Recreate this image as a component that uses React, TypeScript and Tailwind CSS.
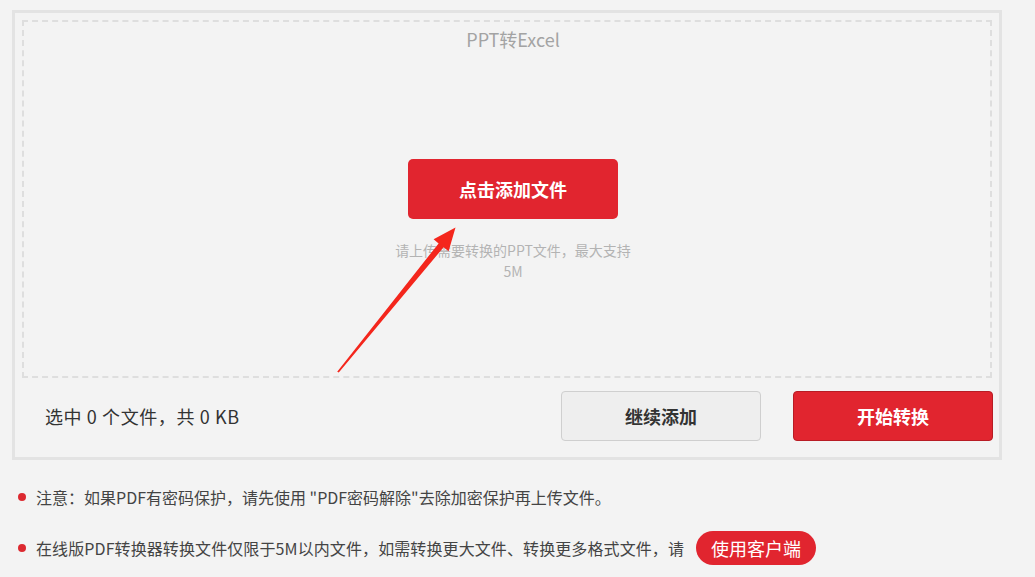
import React from 'react'

const font = { fontFamily: '"Microsoft YaHei", "Noto Sans CJK SC", "Noto Sans", sans-serif' }

function Arrow() {
  // red hand-drawn style pointer onto the upload button
  return (
    <svg className="pointer-events-none absolute left-0 top-0" width="1035" height="577" viewBox="0 0 1035 577">
      <polygon
        points="337.2,371.8 438.6,243.4 433.6,239.2 455.5,227.5 448.6,251.2 443.6,247.2 338.8,372.6"
        fill="#f4261c"
      />
    </svg>
  )
}

export default function App() {
  return (
    <div className="relative min-h-screen w-full bg-[#f3f3f3] pt-[10px] text-[#333]" style={font}>
      <div className="ml-[12px] w-[990px] border-[3px] border-[#e3e3e3] px-[7px] pt-[7px] pb-[16px]">
        {/* Zone de dépôt */}
        <div className="flex h-[358px] flex-col items-center border-2 border-dashed border-[#dedede] pt-[5px] pl-[12px]">
          <p className="text-[18px] leading-6 text-[#a3a3a3]">PPT转Excel</p>
          <button className="mt-[108px] flex h-[60px] w-[210px] items-center justify-center rounded-[5px] bg-[#e1252f] text-[18px] font-bold text-white">
            点击添加文件
          </button>
          <p className="mt-[21px] w-[240px] text-center text-[14px] leading-[21px] text-[#b3b3b3]">
            请上传需要转换的PPT文件，最大支持5M
          </p>
        </div>

        {/* Barre du bas */}
        <div className="mt-[13px] -mr-[1px] flex items-center">
          <span className="ml-[23px] flex-1 text-[18px] tracking-[0.6px] text-[#333]">选中 0 个文件，共 0 KB</span>
          <button className="flex h-[50px] w-[200px] items-center justify-center rounded-[4px] border border-[#cfcfcf] bg-[#eeeeee] text-[18px] font-bold text-[#333]">
            继续添加
          </button>
          <button className="ml-[32px] flex h-[50px] w-[200px] items-center justify-center rounded-[4px] border border-[#b81c24] bg-[#e1252f] text-[18px] font-bold text-white">
            开始转换
          </button>
        </div>
      </div>

      {/* Remarques */}
      <div className="mt-[22px] flex flex-col gap-[19px] pl-[18px] text-[16px] text-[#444]">
        <div className="flex h-[30px] items-center">
          <span className="mr-[10px] h-[8px] w-[8px] rounded-full bg-[#dc2930]" />
          <span>注意：如果PDF有密码保护，请先使用 "PDF密码解除"去除加密保护再上传文件。</span>
        </div>
        <div className="flex h-[34px] items-center">
          <span className="mr-[10px] h-[8px] w-[8px] rounded-full bg-[#dc2930]" />
          <span className="tracking-[0.1px]">在线版PDF转换器转换文件仅限于5M以内文件，如需转换更大文件、转换更多格式文件，请</span>
          <button className="ml-[12px] flex h-[34px] items-center rounded-full bg-[#e1252f] px-[15px] text-[18px] text-white">
            使用客户端
          </button>
        </div>
      </div>

      <Arrow />
    </div>
  )
}
